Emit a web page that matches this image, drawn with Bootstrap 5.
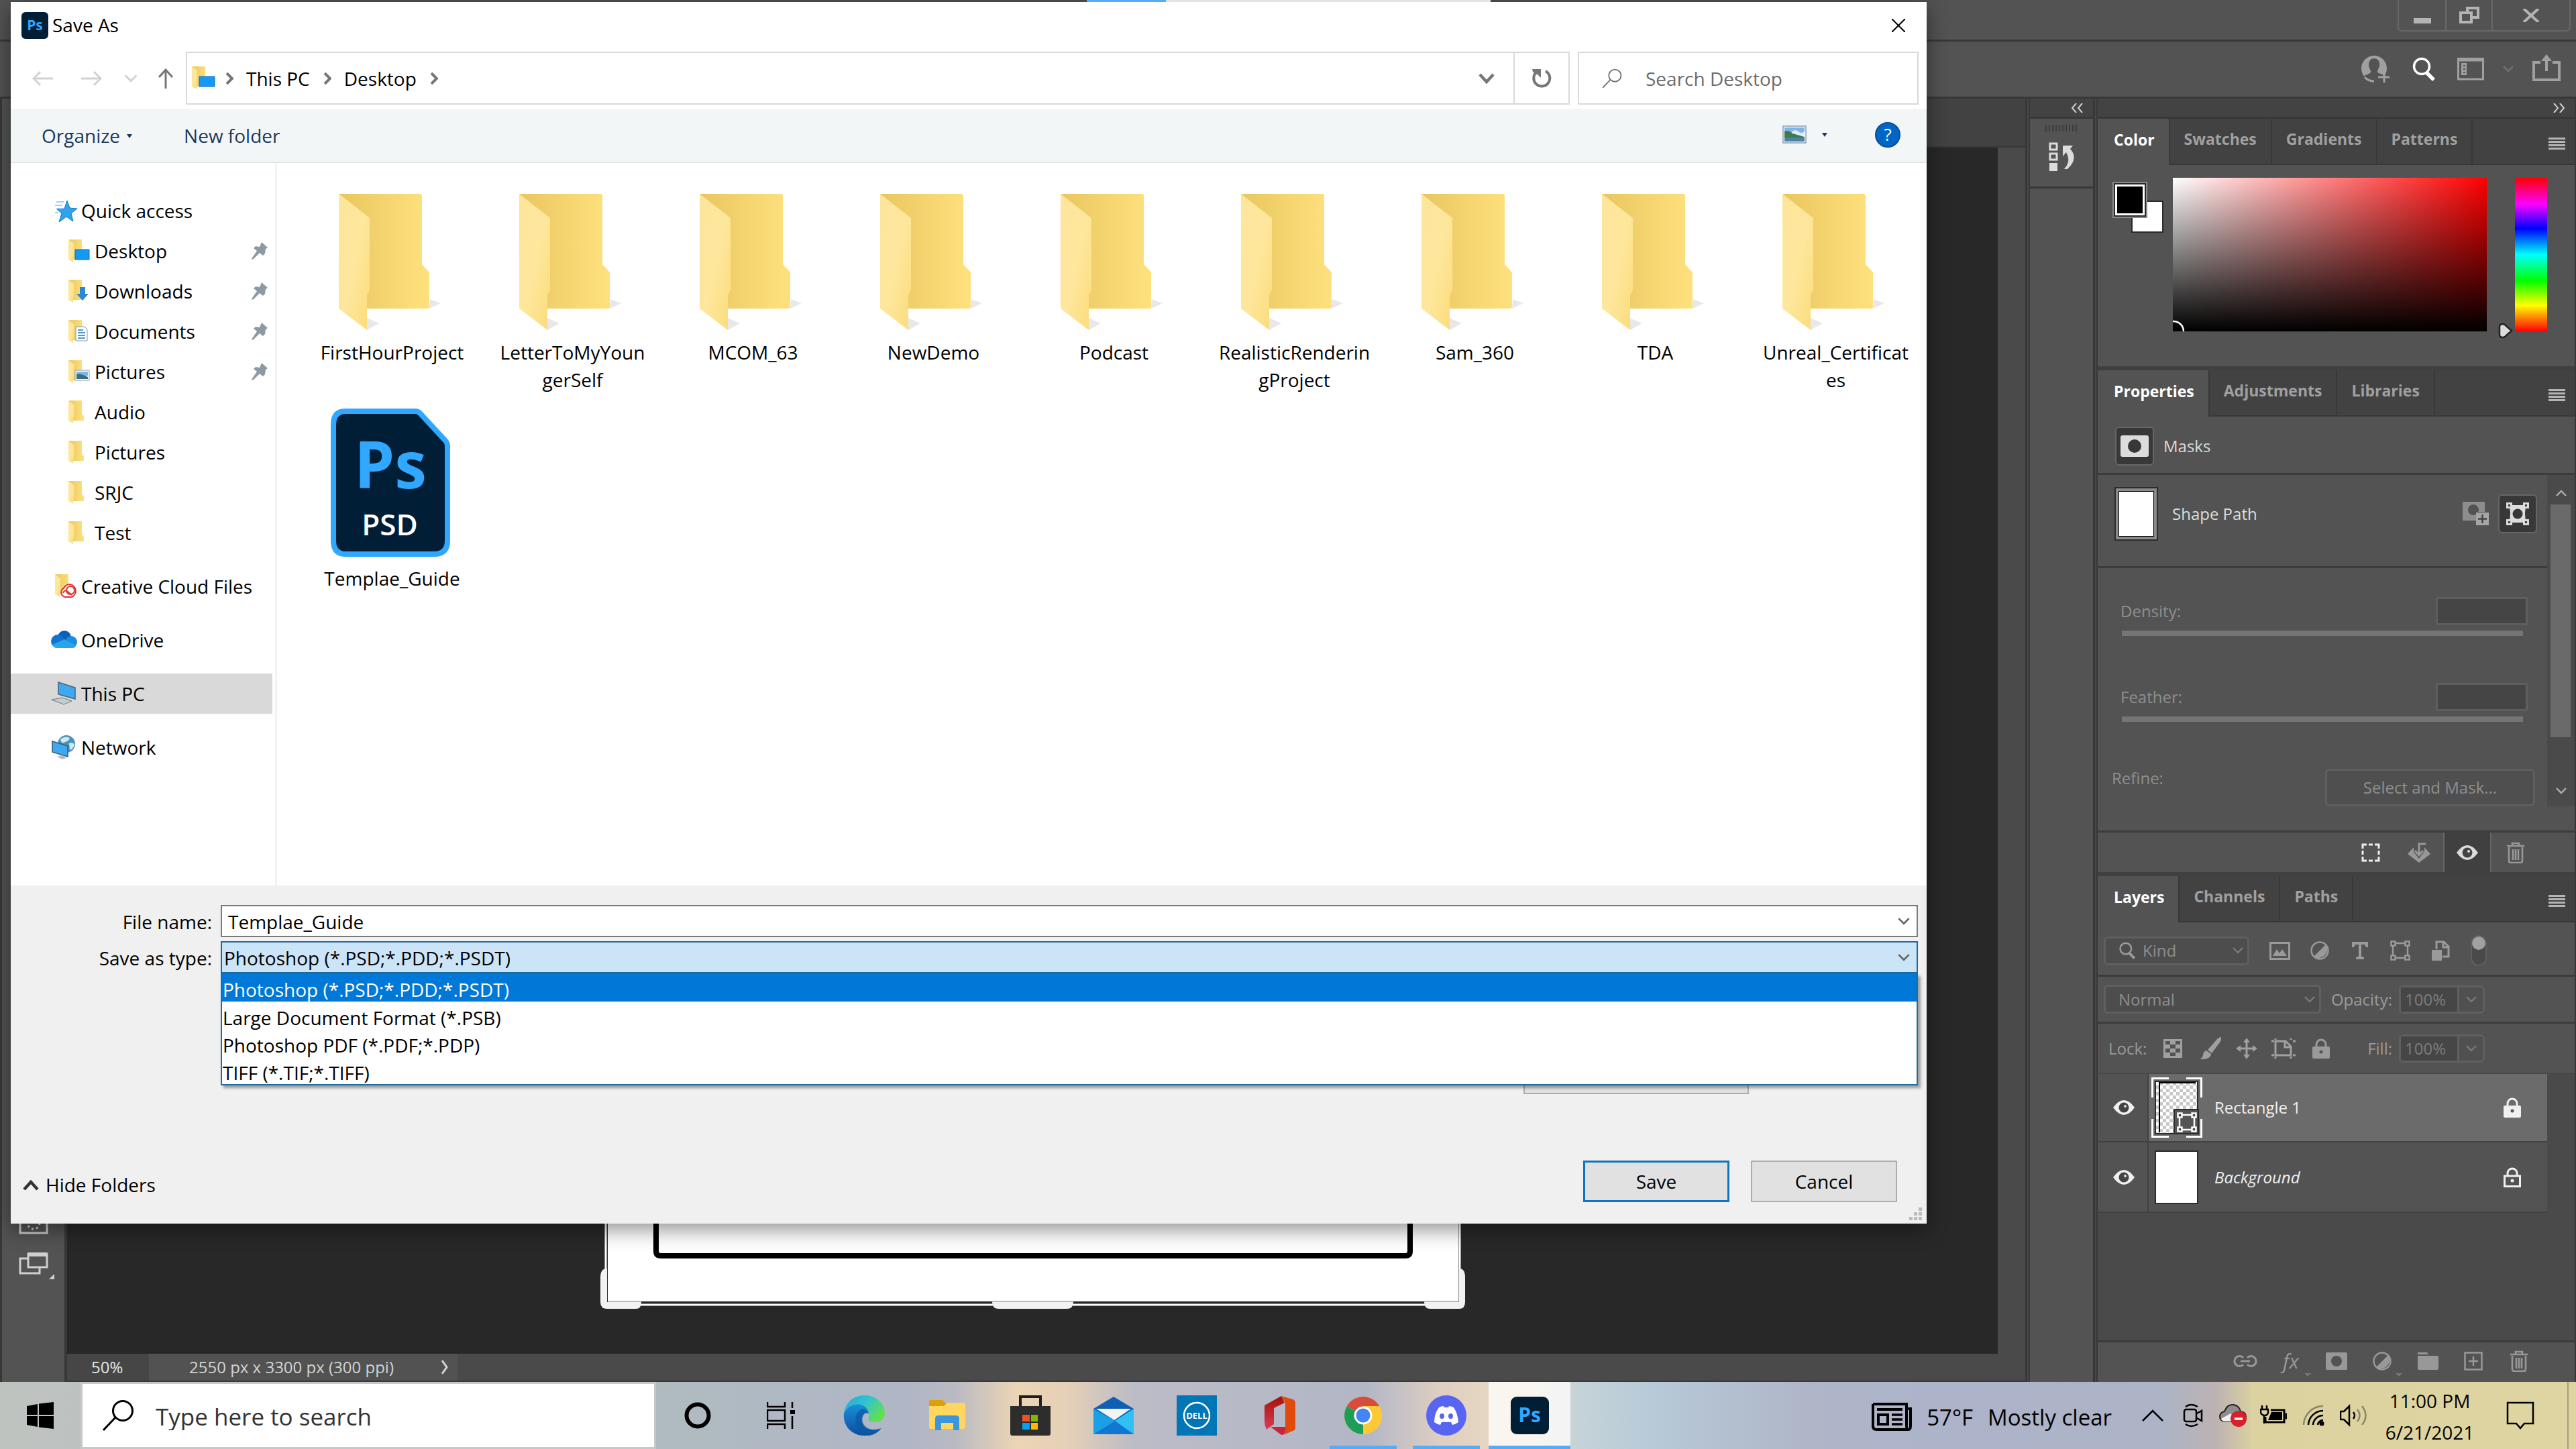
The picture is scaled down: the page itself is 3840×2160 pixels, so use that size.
<!DOCTYPE html>
<html lang="en">
<head>
<meta charset="utf-8">
<meta name="viewport" content="width=device-width, initial-scale=1">
<title>Save As</title>
<link href="https://cdn.jsdelivr.net/npm/bootstrap@5.3.0/dist/css/bootstrap.min.css" rel="stylesheet">
<style>
  html, body { height: 100%; }
  body { font-family: "Open Sans", "Noto Sans", sans-serif; font-size: 28px; line-height: 41px; color: #000; background: #282828; overflow: hidden; }
  svg { display: block; flex: none; }
  button { font: inherit; color: inherit; background: none; border: 0; padding: 0; }
  a { color: inherit; text-decoration: none; }
  .slot { display: flex; align-items: center; justify-content: center; flex: none; }
  .w52 { width: 52px; } .w54 { width: 54px; } .w56 { width: 56px; } .w58 { width: 58px; } .w60 { width: 60px; } .w72 { width: 72px; }

  /* ---- Photoshop window ---- */
  .ps-app { background: #535353; color: #dcdcdc; font-size: 24px; line-height: 28px; min-height: 0; }
  .ps-title { height: 62px; border-bottom: 3px solid #383838; }
  .win-box { height: 47px; margin-right: 8px; border: 2px solid #676767; border-top: 0; border-radius: 0 0 6px 6px; color: #b4b4b4; }
  .win-box button { width: 69px; }
  .win-box button:last-child { width: 116px; }
  .win-box button + button { border-left: 2px solid #676767; }
  .ps-options { height: 85px; border-bottom: 3px solid #383838; padding-right: 23px; color: #a0a0a0; }
  .ps-tools { width: 100px; border-left: 3px solid #383838; border-right: 4px solid #383838; padding-left: 25px; padding-bottom: 152px; color: #cfcfcf; }
  .doc-tabs { height: 73px; background: #424242; border-bottom: 2px solid #383838; }
  .doc-canvas { background: #282828; }
  .artboard { left: 795px; bottom: 66px; }
  .doc-vbar { width: 41px; background: #4a4a4a; }
  .doc-status { height: 42px; background: #4a4a4a; border-bottom: 2px solid #383838; }
  .zoom-field { width: 122px; background: #464646; color: #e6e6e6; padding-left: 36px; }
  .size-field { width: 460px; background: #525252; padding: 0 14px 0 60px; color: #d2d2d2; }
  .sep-v { width: 7px; background: #474747; border-left: 3px solid #383838; border-right: 2px solid #383838; }
  .dock { width: 94px; }
  .dock-top { height: 30px; background: #434343; border-bottom: 3px solid #383838; padding-right: 14px; color: #d0d0d0; }
  .dock-group { height: 104px; border-bottom: 3px solid #383838; padding-top: 9px; }
  .grip { width: 48px; height: 10px; margin-bottom: 16px; background: repeating-linear-gradient(90deg, #3c3c3c 0 2px, transparent 2px 5px); }
  .panels { width: 713px; border-right: 2px solid #383838; }
  .panel { background: #535353; }
  .panel + .panel { border-top: 6px solid #404040; }
  .ptabs { height: 69px; background: #424242; border-bottom: 2px solid #383838; }
  .ptab { padding: 0 21px 7px; border-right: 2px solid #383838; color: #a0a0a0; font-weight: 700; font-size: 23px; height: 67px; }
  .ptab.on { background: #535353; color: #fff; height: 69px; padding-left: 24px; }
  .pmenu { width: 25px; height: 18px; margin: 6px 14px 0 0; background: repeating-linear-gradient(#b4b4b4 0 3px, transparent 3px 5px); }
  .color-body { height: 300px; padding: 19px 41px 0 22px; }
  .chips { width: 90px; height: 80px; }
  .chip-fg { left: 0; top: 6px; width: 44px; height: 46px; margin: 4px; background: #000; border: 3px solid #fff; outline: 2px solid #2a2a2a; box-shadow: 0 0 0 4px #8a8a8a; }
  .chip-bg { left: 28px; top: 34px; width: 48px; height: 48px; background: #fff; border: 2px solid #2a2a2a; }
  .sv-field { height: 229px; background: linear-gradient(to top, #000, rgba(0,0,0,0)), linear-gradient(to right, #fff, #f00); }
  .hue-arrow { margin: 216px 0 0 17px; }
  .hue { width: 48px; height: 229px; margin-left: 3px; background: linear-gradient(#f00, #f0f 17%, #00f 33%, #0ff 50%, #0f0 67%, #ff0 83%, #f00); }
  .masks-row { height: 87px; border-bottom: 3px solid #3c3c3c; padding: 4px 0 0 26px; gap: 14px; }
  .tile-btn { width: 58px; height: 58px; background: #383838; border: 2px solid #666; border-radius: 6px; color: #dcdcdc; }
  .shape-row { height: 139px; border-bottom: 3px solid #3c3c3c; padding: 14px 15px 34px 25px; gap: 21px; }
  .thumb { width: 65px; height: 80px; background: #fff; border: 2px solid #2c2c2c; margin-right: 24px; }
  .thumb-pad { box-shadow: inset 0 0 0 4px #8a8a8a, inset 0 0 0 5px #000; margin-right: 0; }
  .dim { color: #8e8e8e; }
  .mask-form { padding: 43px 18px 0 21px; }
  .num-box { width: 137px; height: 42px; background: #454545; border: 3px solid #5e5e5e; }
  .num-row { padding: 0 11px 0 13px; margin-bottom: 8px; }
  .track { appearance: none; display: block; height: 8px; width: auto; margin: 0 18px 70px 15px; background: #757575; align-self: stretch; }
  .track::-webkit-slider-thumb { appearance: none; width: 0; height: 0; }
  .sm-btn { width: 313px; height: 56px; border: 3px solid #5f5f5f; border-radius: 6px; background: #4f4f4f; }
  .vscroll { width: 41px; background: #4a4a4a; padding: 22px 0 18px; color: #b0b0b0; }
  .vthumb { width: 30px; height: 347px; background: #6a6a6a; margin: 12px 6px 0 5px; }
  .pfoot { height: 62px; border-top: 3px solid #3c3c3c; padding-right: 52px; color: #989898; }
  .pfoot.mfoot { margin-top: 36px; }
  .pfoot .slot { width: 72px; height: 100%; }
  .lfoot { padding-right: 49px; padding-bottom: 4px; }
  .lfoot .slot { width: 68px; position: relative; }
  .more::after { content: ""; position: absolute; right: 4px; bottom: 4px; border: 5px solid transparent; border-top-color: #757575; border-bottom: 0; }
  .fx { font-size: 30px; font-style: italic; }
  .eye-on { background: #404040; color: #dcdcdc; border-left: 2px solid #666; border-right: 2px solid #666; }
  .lrow { border-bottom: 3px solid #3c3c3c; padding: 0 134px 0 9px; color: #9a9a9a; height: 70px; }
  .lrow.kind-row { height: 81px; padding: 6px 0 0 9px; }
  .lrow.lock-row { height: 75px; padding-left: 16px; border-bottom: 2px solid #484848; }
  .lock-row > span:first-child { width: 68px; }
  .combo { height: 43px; border: 3px solid #5f5f5f; border-radius: 6px; background: #4d4d4d; padding: 0 6px 0 19px; gap: 10px; flex: none; width: 324px; }
  .kind-row .combo { width: 217px; }
  .combo > svg:last-child, .pct svg { color: #7a7a7a; }
  .combo select { appearance: none; background: none; border: 0; color: #8e8e8e; opacity: 1; padding: 0; width: 100%; min-width: 0; font: inherit; line-height: 28px; outline: 0; }
  .pct { width: 128px; height: 42px; border: 3px solid #5f5f5f; border-radius: 6px; background: #505050; margin-left: 10px; }
  .pct input { width: 87px; background: #464646; border: 0; border-right: 3px solid #5f5f5f; color: #7c7c7c; font: inherit; padding: 0 0 0 6px; }
  .filters { margin-left: 15px; }
  .toggle { width: 24px; height: 46px; border: 2px solid #5f5f5f; border-radius: 12px; background: #4a4a4a; }
  .toggle::before { content: ""; display: block; width: 20px; height: 20px; border-radius: 50%; background: #a0a0a0; }
  .layers { background: #4a4a4a; }
  .layer { margin-right: 41px; background: #535353; border-bottom: 2px solid #424242; color: #f0f0f0; }
  .layer .eye { width: 76px; border-right: 2px solid #424242; padding-left: 4px; }
  .layer .face { padding: 0 38px 0 9px; }
  .layer.sel .face { background: #6b6b6b; }
  .layer.sel { height: 102px; }
  .layer.back { height: 105px; }
  .checker { background: repeating-conic-gradient(#c8c8c8 0 25%, #fff 0 50%) 0 0 / 10px 10px; }
  .sel-frame { left: -5px; top: -5px; }
  .sel-kind { left: 33px; top: 47px; color: #fff; }

  /* ---- Save dialog ---- */
  .top-strip { left: 1620px; top: 0; width: 602px; height: 3px; background: linear-gradient(90deg, #56acf6 0 118px, #e4e4e4 118px); }
  .dlg { left: 16px; right: 968px; top: 3px; bottom: 236px; background: #fff; color: #000; font-size: 28px; line-height: 41px; box-shadow: 0 8px 30px rgba(0,0,0,.45); }
  .dlg-title { height: 69px; padding: 0 32px 0 16px; gap: 6px; }
  .dlg-nav { height: 90px; padding: 5px 12px 6px; color: #767676; }
  .off { color: #d2d2d2; }
  .recent { width: 46px; }
  .go-up { width: 57px; margin-right: 2px; }
  .crumbs { border: 2px solid #d9d9d9; height: 79px; color: #000; padding-left: 7px; }
  .crumbs a { padding-top: 2px; margin: 0 20px 0 19px; }
  .crumbs .home { margin-right: 14px; }
  .crumbs .drop { margin-right: 28px; }
  .refresh { width: 82px; border-left: 2px solid #d9d9d9; }
  .find { width: 508px; height: 79px; border: 2px solid #d9d9d9; margin-left: 12px; padding-left: 33px; gap: 34px; }
  .find input { border: 0; outline: 0; font: inherit; padding: 2px 0 0; min-width: 0; }
  .find input::placeholder { color: #6b6b6b; opacity: 1; }
  .dlg-bar { height: 81px; background: #f2f6f7; border-bottom: 2px solid #e2e6e8; color: #1e395b; padding: 2px 39px 0 46px; }
  .gap10 { gap: 10px; }
  .gap13 { gap: 13px; }
  .newf { margin-left: 77px; }
  .viewb { gap: 23px; }
  .help { width: 38px; height: 38px; background: #0066c6; color: #fff; margin-left: 71px; border: 2px solid #0b4d96; border-radius: 50%; font-size: 26px; }
  .side { width: 397px; border-right: 3px solid #f2f2f2; padding-top: 41px; }
  .side a { display: flex; align-items: center; height: 60px; padding-left: 59px; gap: 6px; color: #000; margin-right: 4px; white-space: nowrap; }
  .side a.sub { padding-left: 79px; }
  .side a.top { margin-top: 20px; }
  .side a.sel { background: #d9d9d9; }
  .side .pin { margin-left: auto; margin-right: 7px; color: #8d9aa3; }
  .files { padding: 22px 0 0 37px; display: grid; grid-template-columns: repeat(auto-fill, 269px); grid-auto-rows: 337px; align-content: start; }
  .file { text-align: center; color: #000; }
  .file svg { margin: 0 auto; }
  .dlg-main { min-height: 0; }
  .dlg-foot { background: #f0f0f0; height: 504px; padding-top: 29px; }
  .frow { height: 48px; padding-right: 13px; margin-bottom: 6px; }
  .frow label { width: 313px; padding: 2px 13px 0 0; text-align: right; }
  .frow input { height: 48px; border: 2px solid #7a7a7a; padding: 2px 9px 0; font: inherit; outline: 0; }
  .frow select { appearance: none; width: 100%; height: 48px; border: 2px solid #1b6a9c; background: #cce4f7; padding: 2px 3px 0; font: inherit; color: #000; outline: 0; }
  .mid-arrow { right: 12px; top: 19px; color: #666; pointer-events: none; }
  .types { left: 0; right: 0; top: 48px; background: #fff; border: 2px solid #1b6fa0; border-top: 0; box-shadow: 4px 4px 4px rgba(0,0,0,.35); z-index: 3; }
  .types li { padding-left: 1px; height: 41px; line-height: 49px; }
  .types li.on { background: #0078d7; color: #fff; height: 42px; }
  .wbtn { width: 218px; height: 62px; background: #e1e1e1; border: 2px solid #adadad; }
  .wbtn.def { border: 3px solid #0e74c4; }
  .under { width: 336px; margin: 112px 265px 0 auto; }
  .dlg-actions { padding: 0 44px 32px 18px; gap: 32px; }
  .hide-btn { padding-top: 11px; }
  .hide-f { width: 163px; overflow: hidden; white-space: nowrap; }
  .resize-grip { right: 6px; bottom: 5px; }

  /* ---- Taskbar ---- */
  .task { height: 100px; background: linear-gradient(90deg, #bfc3c0 0, #b0bbc0 26%, #b0b6c6 35%, #b8b9c2 37%, #ecd5b5 39.5%, #e4d0b8 41.5%, #bcbcc6 44%, #b2b6c6 53%, #e0cfc2 56%, #eadcc0 59%, #c5d3d8 61.2%, #b7cad8 64%, #b0b6c8 70%, #adb3ca 75%, #adb4c6 84%, #bcb2b2 86%, #dcd2a0 87.5%, #dfd5a2 100%); }
  .start-btn { width: 120px; }
  .task .app { width: 124px; height: 100px; position: relative; }
  .task .run::after { content: ""; position: absolute; left: 12px; right: 12px; bottom: 0; height: 5px; background: #56acf6; }
  .task .front { background: rgba(255,255,255,.75); width: 122px; margin-left: 1px; }
  .task .front::after { left: 0; right: 0; }
  .task-find { width: 858px; background: #fff; border: 3px solid #c6c8c8; padding-left: 29px; gap: 32px; }
  .task-find input { border: 0; outline: 0; font-size: 35px; padding: 2px 0 0; }
  .task-find input::placeholder { color: #333; opacity: 1; }
  .weather { font-size: 33px; gap: 22px; padding: 4px 31px 0 0; }
  .tray { width: 60px; }
  .clock { width: 166px; line-height: 47px; padding-top: 4px; text-align: center; }
  .notes { width: 104px; }
  .peek { margin-left: 18px; width: 13px; border-left: 2px solid #a89f7c; }
</style>
</head>
<body class="d-flex flex-column">
<svg width="0" height="0" class="position-absolute" aria-hidden="true">
  <defs>
    <linearGradient id="gb" x1="0" x2="1"><stop offset="0" stop-color="#e9c660"/><stop offset=".6" stop-color="#f6d772"/><stop offset="1" stop-color="#fee17e"/></linearGradient>
    <linearGradient id="gf" x1="0" y1="0" x2="1" y2="1"><stop offset="0" stop-color="#fde69b"/><stop offset=".5" stop-color="#fee79d"/><stop offset="1" stop-color="#fcdc7a"/></linearGradient>
    <linearGradient id="ge1" x1="0" y1="0" x2="1" y2=".6"><stop offset="0" stop-color="#2aa8d8"/><stop offset=".5" stop-color="#30c3d0"/><stop offset="1" stop-color="#62e04c"/></linearGradient>
    <linearGradient id="ge2" x1="0" y1="0" x2="0" y2="1"><stop offset="0" stop-color="#1a8fd8"/><stop offset="1" stop-color="#0b4fa0"/></linearGradient>
    <linearGradient id="go" x1="0" y1="0" x2="0" y2="1"><stop offset="0" stop-color="#a01408"/><stop offset="1" stop-color="#e03a58"/></linearGradient>
  </defs>
  <symbol id="folder" viewBox="0 0 156 206">
    <path d="M135 171l17-8-16-6z" fill="#d8d8d8" opacity=".6"/><path d="M42 203l18-10-18-8z" fill="#d8d8d8" opacity=".6"/>
    <path d="M0 0h121q3 0 3 3v102l11 12v51q0 3-3 3H20z" fill="url(#gb)"/>
    <path d="M0 0l46 36v107l-4 8v52L0 171z" fill="url(#gf)"/>
  </symbol>
  <symbol id="sfolder" viewBox="0 0 24 34"><path d="M0 0h20v20l3 3v7H6z" fill="url(#gb)"/><path d="M0 0l8 6v19l-1 2v7L0 30z" fill="url(#gf)"/></symbol>
  <symbol id="pin" viewBox="0 0 26 26"><path d="M17 0l9 8-3 2-1 7-3 3-5-4-9 9-3 1 1-3 7-10-5-4 3-3 6 1z" fill="currentColor"/></symbol>
  <symbol id="chev" viewBox="0 0 16 10"><path d="M1 1l7 7 7-7" fill="none" stroke="currentColor" stroke-width="2.4"/></symbol>
  <symbol id="uchev" viewBox="0 0 16 10"><path d="M1 9l7-7 7 7" fill="none" stroke="currentColor" stroke-width="2.4"/></symbol>
  <symbol id="rchev" viewBox="0 0 12 18"><path d="M2 1l8 8-8 8" fill="none" stroke="#767676" stroke-width="4"/></symbol>
  <symbol id="eye" viewBox="0 0 32 22"><path d="M0 11Q16-11 32 11 16 33 0 11z" fill="currentColor"/><circle cx="16" cy="11" r="7.500" fill="#444"/><circle cx="18" cy="9" r="2" fill="#ddd"/></symbol>
  <symbol id="trash" viewBox="0 0 28 32"><path d="M1 6h26M9 5V2h10v3M4 8v20q0 3 3 3h14q3 0 3-3V8M10 11v16M14 11v16M18 11v16" fill="none" stroke="currentColor" stroke-width="2.600"/></symbol>
  <symbol id="half" viewBox="0 0 28 28"><circle cx="14" cy="14" r="12.500" fill="none" stroke="currentColor" stroke-width="2.500"/><path d="M23 5A13 13 0 0 1 5 23z" fill="currentColor"/></symbol>
  <symbol id="vec" viewBox="0 0 30 30"><path d="M4 4h22v22H4z" fill="none" stroke="currentColor" stroke-width="2.500"/><g fill="#4a4a4a" stroke="currentColor" stroke-width="2.500"><path d="M1.500 1.500h6v6h-6zM22.500 1.500h6v6h-6zM1.500 22.500h6v6h-6zM22.500 22.500h6v6h-6z"/></g></symbol>
  <symbol id="pad" viewBox="0 0 28 30"><path d="M7 13V9a7 7 0 0 1 14 0v4" fill="none" stroke="currentColor" stroke-width="3"/><rect x="1" y="12" width="26" height="18" rx="2" fill="currentColor"/><circle cx="14" cy="20" r="2.500" fill="#555"/></symbol>
  <symbol id="mag" viewBox="0 0 36 36"><circle cx="15" cy="14" r="11.500" fill="none" stroke="currentColor" stroke-width="3.500"/><path d="M22 23l11 11" stroke="currentColor" stroke-width="5.500"/></symbol>
  <symbol id="glass" viewBox="0 0 48 48"><circle cx="31" cy="17" r="14.500" fill="none" stroke="currentColor" stroke-width="3"/><path d="M20 27L2 46" stroke="currentColor" stroke-width="3"/></symbol>
</svg>

<main class="ps-app flex-grow-1 d-flex flex-column position-relative">
  <header class="ps-title d-flex justify-content-end">
    <div class="win-box d-flex">
      <button class="slot" aria-label="Minimize"><svg width="26" height="8" class="mt-3"><rect width="26" height="8" fill="currentColor"/></svg></button>
      <button class="slot" aria-label="Restore"><svg width="30" height="25" viewBox="0 0 30 25" fill="none" stroke="currentColor" stroke-width="4"><path d="M12 10V2h16v14h-8M2 9h16v14H2z"/></svg></button>
      <button class="slot" aria-label="Close Photoshop"><svg width="26" height="20" viewBox="0 0 26 20"><path d="M2 0l22 20M24 0L2 20" stroke="currentColor" stroke-width="4"/></svg></button>
    </div>
  </header>
  <div class="ps-options d-flex align-items-center justify-content-end">
    <button class="slot me-4" aria-label="Share with people"><svg width="44" height="42" viewBox="0 0 44 42"><circle cx="20" cy="20" r="19" fill="currentColor"/><path d="M20 5c6 0 9 5 8 11-1 5-3 6-3 9 0 2 6 3 9 5l-4 12H14q-8-3-10-10c4-3 11-4 11-7 0-4-3-5-3-10 0-6 3-10 8-10z" fill="#535353"/><path d="M6 33q5 6 14 6M26 33h17M35 25v16" stroke="currentColor" stroke-width="3" fill="none"/></svg></button>
    <button class="slot me-4 px-2 text-white" aria-label="Search"><svg width="36" height="36"><use href="#mag"/></svg></button>
    <button class="slot" aria-label="Workspace"><svg width="40" height="34" viewBox="0 0 40 34"><path d="M1.500 4h37v28h-37z" fill="none" stroke="currentColor" stroke-width="3"/><path d="M0 0h40v4H0z" fill="currentColor"/><path d="M6 8h8v18H6z" fill="currentColor"/><path d="M9 11h3v2H9zM9 16h3v2H9zM9 21h3v2H9z" fill="#535353"/></svg></button>
    <button class="slot w72" aria-label="Workspace list"><svg width="16" height="10" class="text-secondary"><use href="#chev"/></svg></button>
    <button class="slot pb-1" aria-label="Share"><svg width="42" height="40" viewBox="0 0 42 40" fill="none" stroke="currentColor" stroke-width="4"><path d="M12 12H2v26h38V12H30M21 25V7"/><path d="M21 0l8 10H13z" fill="currentColor" stroke="none"/></svg></button>
  </div>

  <div class="d-flex flex-grow-1 dlg-main">
    <aside class="ps-tools d-flex flex-column justify-content-end flex-shrink-0">
      <svg width="44" height="34" viewBox="0 0 44 34" class="mb-4" fill="none" stroke="currentColor" stroke-width="3"><path d="M2 2h40v28H2z"/><circle cx="22" cy="15" r="9" stroke-dasharray="3 4"/></svg>
      <svg width="54" height="42" viewBox="0 0 54 42" fill="none" stroke="currentColor" stroke-width="3"><path d="M13 10H2v22h29v-8"/><path d="M14 3h28v20H14z"/><path d="M14 4h28" stroke-width="6"/><path d="M53 33v8h-8z" fill="currentColor" stroke="none"/></svg>
    </aside>

    <section class="flex-grow-1 d-flex flex-column">
      <div class="doc-tabs flex-shrink-0"></div>
      <div class="flex-grow-1 d-flex">
        <div class="doc-canvas flex-grow-1 position-relative overflow-hidden">
          <!-- artboard with transform handles -->
          <svg class="artboard position-absolute" width="1290" height="180" viewBox="0 0 1290 180">
            <path d="M8 0v173h1273V0" fill="none" stroke="#fff" stroke-width="3"/>
            <path d="M0 132q0-13 10-13V169h51q0 10-8 10H10q-10 0-10-10zM584 169h121q0 10-10 10H594q-10 0-10-10zM1228 169h52V119q9 0 9 13v37q0 10-9 10h-43q-9 0-9-10z" fill="#f2f2f2"/>
            <path d="M11 0h1268v168H11z" fill="#fff"/><path d="M11 168h50M584 168h121M1228 168h51" stroke="#bbb" stroke-width="2"/>
            <path d="M83 0v93q0 7 7 7h1110q7 0 7-7V0" fill="none" stroke="#000" stroke-width="8"/>
          </svg>
        </div>
        <div class="doc-vbar"></div>
      </div>
      <div class="doc-status d-flex flex-shrink-0">
        <div class="zoom-field d-flex align-items-center">50%</div>
        <div class="size-field d-flex align-items-center justify-content-between"><span>2550 px x 3300 px (300 ppi)</span><svg width="10" height="22" viewBox="0 0 10 22"><path d="M1 1l7 10-7 10" fill="none" stroke="currentColor" stroke-width="3"/></svg></div>
      </div>
    </section>

    <div class="sep-v flex-shrink-0"></div>
    <aside class="dock flex-shrink-0">
      <div class="dock-top d-flex align-items-center justify-content-end"><svg width="19" height="14" viewBox="0 0 19 14"><path d="M8 0L2 7l6 7M17 0l-6 7 6 7" fill="none" stroke="currentColor" stroke-width="2"/></svg></div>
      <div class="dock-group d-flex flex-column align-items-center">
        <div class="grip"></div>
        <svg width="38" height="44" viewBox="0 0 38 44" fill="none" stroke="#dcdcdc" stroke-width="3"><path d="M2 2h10v9H2zM2 17h10v9H2z"/><path d="M1 31h12v12H1z" fill="#dcdcdc" stroke="none"/><path d="M21 5h15l-4 5q13 14-4 30l-5 0q11-12 3-25l-5 6z" fill="#dcdcdc" stroke="none"/></svg>
      </div>
    </aside>
    <div class="sep-v flex-shrink-0"></div>

    <aside class="panels flex-shrink-0 d-flex flex-column">
      <div class="dock-top d-flex align-items-center justify-content-end flex-shrink-0"><svg width="19" height="14" viewBox="0 0 19 14"><path d="M2 0l6 7-6 7M11 0l6 7-6 7" fill="none" stroke="currentColor" stroke-width="2"/></svg></div>

      <section class="panel">
        <div class="ptabs d-flex"><button class="ptab on">Color</button><button class="ptab">Swatches</button><button class="ptab">Gradients</button><button class="ptab">Patterns</button><span class="pmenu ms-auto align-self-center"></span></div>
        <div class="color-body d-flex">
          <div class="chips position-relative flex-shrink-0"><span class="chip-bg position-absolute"></span><span class="chip-fg position-absolute"></span></div>
          <div class="sv-field flex-grow-1 position-relative"><svg class="position-absolute bottom-0 start-0" width="18" height="18"><path d="M0 3a15 15 0 0 1 16 15" fill="none" stroke="#fff" stroke-width="2.500"/></svg></div>
          <svg class="hue-arrow" width="22" height="24" viewBox="0 0 22 24"><path d="M2 6q0-4 5-4 3 0 6 4l7 6-7 6q-3 4-6 4-5 0-5-4z" fill="#dcdcdc" stroke="#222" stroke-width="2.500"/></svg>
          <div class="hue"></div>
        </div>
      </section>

      <section class="panel">
        <div class="ptabs d-flex"><button class="ptab on">Properties</button><button class="ptab">Adjustments</button><button class="ptab">Libraries</button><span class="pmenu ms-auto align-self-center"></span></div>
        <div class="masks-row d-flex align-items-center">
          <span class="tile-btn slot"><svg width="42" height="32" viewBox="0 0 42 32"><rect width="42" height="32" rx="3" fill="currentColor"/><circle cx="21" cy="16" r="10" fill="#383838"/></svg></span><span>Masks</span>
        </div>
        <div class="d-flex">
          <div class="flex-grow-1">
            <div class="shape-row d-flex align-items-center">
              <span class="thumb thumb-pad"></span><span>Shape Path</span>
              <span class="d-flex align-items-center ms-auto gap13">
              <button class="slot dim" aria-label="Add mask"><svg width="40" height="36" viewBox="0 0 40 36"><path d="M0 0h33v15H20v13H0z" fill="currentColor"/><circle cx="16" cy="12" r="8" fill="#535353"/><path d="M20 16h19v19H20z" fill="#a5a5a5"/><path d="M23 25.500h13M29.500 19v13" stroke="#444" stroke-width="2.500"/></svg></button>
              <button class="tile-btn slot" aria-label="Vector mask"><svg width="34" height="34" viewBox="0 0 34 34"><path d="M4 4h26q-4 13 0 26H4Q8 17 4 4z" fill="currentColor"/><path d="M0 0h9v9H0zM25 0h9v9h-9zM0 25h9v9H0zM25 25h9v9h-9z" fill="currentColor"/><path d="M3 3h3v3H3zM28 3h3v3h-3zM3 28h3v3H3zM28 28h3v3h-3z" fill="#383838"/><circle cx="17" cy="17" r="7.500" fill="#383838"/></svg></button>
              </span>
            </div>
            <div class="mask-form d-flex flex-column dim">
              <div class="num-row d-flex align-items-center justify-content-between"><label for="dens">Density:</label><input id="dens" class="num-box" disabled></div>
              <input type="range" class="track" aria-label="Density" disabled>
              <div class="num-row d-flex align-items-center justify-content-between"><label for="feat">Feather:</label><input id="feat" class="num-box" disabled></div>
              <input type="range" class="track" aria-label="Feather" disabled>
              <div class="d-flex justify-content-between"><span>Refine:</span><button class="sm-btn" disabled>Select and Mask...</button></div>
            </div>
          </div>
          <div class="vscroll d-flex flex-column align-items-center">
            <svg width="16" height="10"><use href="#uchev"/></svg>
            <div class="vthumb"></div>
            <svg width="16" height="10" class="mt-auto"><use href="#chev"/></svg>
          </div>
        </div>
        <div class="pfoot mfoot d-flex justify-content-end">
          <button class="slot" aria-label="Load selection"><svg width="28" height="28" viewBox="0 0 28 28"><path d="M2 8V2h6M20 2h6v6M26 20v6h-6M8 26H2v-6M11 2h6M26 11v6M17 26h-6M2 17v-6" fill="none" stroke="#eee" stroke-width="3"/></svg></button>
          <button class="slot" aria-label="Apply mask"><svg width="34" height="30" viewBox="0 0 34 30"><path d="M9 7L0 17l17 13 17-13-9-10v6L17 24 9 14z" fill="currentColor"/><path d="M27 2H17v16M11 12l6 7 6-7" fill="none" stroke="currentColor" stroke-width="3"/></svg></button>
          <button class="slot eye-on" aria-label="Toggle mask"><svg width="32" height="22"><use href="#eye"/></svg></button>
          <button class="slot" aria-label="Delete mask"><svg width="28" height="32"><use href="#trash"/></svg></button>
        </div>
      </section>

      <section class="panel flex-grow-1 d-flex flex-column">
        <div class="ptabs d-flex flex-shrink-0"><button class="ptab on">Layers</button><button class="ptab">Channels</button><button class="ptab">Paths</button><span class="pmenu ms-auto align-self-center"></span></div>
        <div class="lrow kind-row d-flex align-items-center">
          <div class="combo d-flex align-items-center"><svg width="26" height="26"><use href="#mag"/></svg><select aria-label="Filter kind" disabled><option>Kind</option></select><svg width="16" height="10"><use href="#chev"/></svg></div>
          <span class="filters d-flex">
            <button class="slot w60" aria-label="Pixel layers"><svg width="31" height="27" viewBox="0 0 31 27"><path d="M1.500 1.500h28v24h-28z" fill="none" stroke="currentColor" stroke-width="3"/><path d="M5 21l6-10 4 6 4-6 7 10z" fill="currentColor"/></svg></button>
            <button class="slot w60" aria-label="Adjustment layers"><svg width="28" height="28"><use href="#half"/></svg></button>
            <button class="slot w60" aria-label="Type layers"><svg width="24" height="26" viewBox="0 0 24 26"><path d="M0 0h24v8h-3l-2-4h-5v18l4 1v3H6v-3l4-1V4H5L3 8H0z" fill="currentColor"/></svg></button>
            <button class="slot w60" aria-label="Shape layers"><svg width="30" height="30"><use href="#vec"/></svg></button>
            <button class="slot w60" aria-label="Smart objects"><svg width="27" height="30" viewBox="0 0 27 30"><path d="M7 13V2h11l7 7v15h-9M17 2v8h8" fill="none" stroke="currentColor" stroke-width="3"/><path d="M0 14h15v16H0z" fill="currentColor"/></svg></button>
            <button class="slot w54" aria-label="Filter on"><span class="toggle"></span></button>
          </span>
        </div>
        <div class="lrow d-flex align-items-center dim">
          <div class="combo d-flex align-items-center"><select aria-label="Blend mode" disabled><option>Normal</option></select><svg width="16" height="10"><use href="#chev"/></svg></div>
          <label for="opac" class="ms-auto">Opacity:</label>
          <div class="pct d-flex align-items-stretch"><input id="opac" value="100%" disabled><span class="slot flex-grow-1"><svg width="16" height="10"><use href="#chev"/></svg></span></div>
        </div>
        <div class="lrow lock-row d-flex align-items-center dim">
          <span>Lock:</span>
          <button class="slot w56" aria-label="Lock transparency"><svg width="28" height="28" viewBox="0 0 28 28"><path d="M1.500 1.500h25v25h-25z" fill="none" stroke="#a0a0a0" stroke-width="3"/><path d="M10 2h8v6h-8zM3 8h7v6H3zM18 8h7v6h-7zM10 14h8v6h-8zM3 20h7v6H3zM18 20h7v6h-7z" fill="#a0a0a0"/></svg></button>
          <button class="slot w56" aria-label="Lock pixels"><svg width="32" height="34" viewBox="0 0 32 34"><path d="M31 0q3 2-1 8L18 24l-6-5L26 3q3-3 5-3zM10 20l7 5q-1 9-17 8 5-2 5-7 1-5 5-6z" fill="#a0a0a0"/></svg></button>
          <button class="slot w52" aria-label="Lock position"><svg width="32" height="32" viewBox="0 0 32 32"><path d="M16 3v26M3 16h26" stroke="#a0a0a0" stroke-width="3"/><path d="M16 0l5 7H11zM16 32l5-7H11zM0 16l7-5v10zM32 16l-7-5v10z" fill="#a0a0a0"/></svg></button>
          <button class="slot w58" aria-label="Lock artboard"><svg width="36" height="30" viewBox="0 0 36 30" fill="none" stroke="#a0a0a0" stroke-width="3"><path d="M6 4h15l8 8v13H6z"/><path d="M20 3v10h9"/><path d="M0 4h4M6 0v2M29 0v2M32 4h4M0 25h4M6 27v3M29 27v3M32 25h4"/></svg></button>
          <button class="slot w54" aria-label="Lock all"><svg width="28" height="30"><use href="#pad"/></svg></button>
          <label for="fillv" class="ms-auto">Fill:</label>
          <div class="pct d-flex align-items-stretch"><input id="fillv" value="100%" disabled><span class="slot flex-grow-1"><svg width="16" height="10"><use href="#chev"/></svg></span></div>
        </div>
        <div class="layers flex-grow-1">
          <div class="layer sel d-flex">
            <button class="eye slot" aria-label="Hide Rectangle 1"><svg width="32" height="22"><use href="#eye"/></svg></button>
            <div class="face flex-grow-1 d-flex align-items-center">
              <span class="position-relative">
                <span class="thumb checker d-block"></span>
                <svg class="sel-frame position-absolute" width="76" height="90" viewBox="0 0 76 90"><path d="M1.500 30V1.500H26M52 1.500h22.500V30M74.500 62v26.500H52M26 88.500H1.500V62" fill="none" stroke="#fff" stroke-width="3"/><path d="M12 82V8h54" fill="none" stroke="#000" stroke-width="2"/><path d="M34 48h36v36H34z" fill="#555" stroke="#2c2c2c" stroke-width="2"/></svg>
                <svg class="sel-kind position-absolute" width="30" height="30"><use href="#vec"/></svg>
              </span>
              <span>Rectangle 1</span>
              <svg width="28" height="30" class="ms-auto"><use href="#pad"/></svg>
            </div>
          </div>
          <div class="layer back d-flex">
            <button class="eye slot" aria-label="Hide Background"><svg width="32" height="22"><use href="#eye"/></svg></button>
            <div class="face flex-grow-1 d-flex align-items-center">
              <span class="thumb"></span>
              <span class="fst-italic">Background</span>
              <svg width="28" height="30" viewBox="0 0 28 30" class="ms-auto" fill="none" stroke="currentColor" stroke-width="3"><path d="M7 13V9a7 7 0 0 1 14 0v4M2.500 13h23v15.500h-23z"/><circle cx="14" cy="20" r="2.500" fill="currentColor" stroke="none"/></svg>
            </div>
          </div>
        </div>
        <div class="pfoot lfoot d-flex justify-content-end flex-shrink-0">
          <button class="slot" aria-label="Link"><svg width="36" height="20" viewBox="0 0 36 20" fill="none" stroke="currentColor" stroke-width="3"><path d="M15 5a7.500 7.500 0 1 0 0 10M21 5a7.500 7.500 0 1 1 0 10M11 10h14"/></svg></button>
          <button class="slot fx more" aria-label="Layer style">fx</button>
          <button class="slot" aria-label="Add layer mask"><svg width="32" height="26" viewBox="0 0 32 26"><rect width="32" height="26" rx="2" fill="currentColor"/><circle cx="16" cy="13" r="8" fill="#535353"/></svg></button>
          <button class="slot more" aria-label="Adjustment"><svg width="28" height="28"><use href="#half"/></svg></button>
          <button class="slot" aria-label="Group"><svg width="31" height="26" viewBox="0 0 31 26"><path d="M0 0h14l2 3H0zM0 5h29q2 0 2 2v17q0 2-2 2H2q-2 0-2-2z" fill="currentColor"/></svg></button>
          <button class="slot" aria-label="New layer"><svg width="28" height="28" viewBox="0 0 28 28"><path d="M1.500 1.500h25v25h-25zM7 14h14M14 7v14" fill="none" stroke="currentColor" stroke-width="2.500"/></svg></button>
          <button class="slot" aria-label="Delete layer"><svg width="28" height="32"><use href="#trash"/></svg></button>
        </div>
      </section>
    </aside>
  </div>

  <!-- Save As window -->
  <section class="dlg position-absolute d-flex flex-column" aria-label="Save As">
    <div class="dlg-title d-flex align-items-center">
      <svg width="40" height="40" viewBox="0 0 40 40"><rect width="40" height="40" rx="6" fill="#001e36"/><text x="20" y="27" text-anchor="middle" font-size="21" font-weight="700" fill="#31a8ff">Ps</text></svg>
      <span>Save As</span>
      <button class="ms-auto slot" aria-label="Close"><svg width="20" height="20" viewBox="0 0 20 20"><path d="M0 0l20 20M20 0L0 20" stroke="#000" stroke-width="2"/></svg></button>
    </div>
    <div class="dlg-nav d-flex align-items-center">
      <button class="slot w72 off" aria-label="Back"><svg width="32" height="22" viewBox="0 0 32 22" fill="none" stroke="currentColor" stroke-width="3"><path d="M31 11H3M12 1L2 11l10 10"/></svg></button>
      <button class="slot w72 off" aria-label="Forward"><svg width="32" height="22" viewBox="0 0 32 22" fill="none" stroke="currentColor" stroke-width="3"><path d="M1 11h28M20 1l10 10-10 10"/></svg></button>
      <button class="slot recent off" aria-label="Recent"><svg width="20" height="12"><use href="#chev"/></svg></button>
      <button class="slot go-up" aria-label="Up"><svg width="24" height="30" viewBox="0 0 24 30" fill="none" stroke="currentColor" stroke-width="3"><path d="M12 30V3M2 13L12 2l10 11"/></svg></button>
      <nav class="crumbs flex-grow-1 d-flex align-items-center" aria-label="Address">
        <svg class="home" width="36" height="36" viewBox="0 0 36 36"><use href="#sfolder" width="24" height="34"/><path d="M11 15h23v15H11z" fill="#1499f5" stroke="#0a6fc4"/></svg>
        <svg width="12" height="18"><use href="#rchev"/></svg>
        <a href="#">This PC</a>
        <svg width="12" height="18"><use href="#rchev"/></svg>
        <a href="#">Desktop</a>
        <svg width="12" height="18"><use href="#rchev"/></svg>
        <svg width="24" height="16" viewBox="0 0 24 16" class="drop ms-auto"><path d="M2 2l10 11L22 2" fill="none" stroke="#767676" stroke-width="4.500"/></svg>
        <button class="slot refresh h-100" aria-label="Refresh"><svg width="30" height="30" viewBox="0 0 30 30"><path d="M21 4a12 12 0 1 1-13 1" fill="none" stroke="#767676" stroke-width="4"/><path d="M1 1h13v13l-4-4-8-5z" fill="#767676"/></svg></button>
      </nav>
      <div class="find d-flex align-items-center"><svg width="32" height="30" viewBox="0 0 48 48"><use href="#glass"/></svg><input type="search" class="flex-grow-1" placeholder="Search Desktop" aria-label="Search Desktop"></div>
    </div>
    <div class="dlg-bar d-flex align-items-center flex-shrink-0">
      <button class="d-flex align-items-center gap10">Organize <svg width="8" height="6" viewBox="0 0 8 6"><path d="M0 0h8L4 6z" fill="currentColor"/></svg></button>
      <button class="newf">New folder</button>
      <button class="viewb ms-auto mb-1 d-flex align-items-center" aria-label="Change view"><svg width="36" height="27" viewBox="0 0 36 27"><path d="M1 1h34v25H1z" fill="#fff" stroke="#8aa0b4" stroke-width="1.500"/><path d="M3 3h30v12H3z" fill="#7db4f0"/><path d="M14 9q6-4 10 0t9 0v6H14z" fill="#dcebfa"/><path d="M3 9q6-3 12 3l18 5v5H3z" fill="#3f7a4a"/><path d="M3 18h30v6H3z" fill="#4a83a8"/></svg><svg width="8" height="6" viewBox="0 0 8 6"><path d="M0 0h8L4 6z" fill="currentColor"/></svg></button>
      <button class="slot help mb-1" aria-label="Help">?</button>
    </div>

    <div class="dlg-main flex-grow-1 d-flex">
      <nav class="side flex-shrink-0">
        <a href="#"><svg width="40" height="40" viewBox="0 0 40 40"><path d="M25 5l4 11 11 1-9 7 3 12-10-7-11 8 4-13-7-6 11-1z" fill="#2ea3ee" stroke="#1278c4"/><path d="M9 7h12M7 12h11M9 17h8M7 23h5" stroke="#7cc4f2" stroke-width="1.500"/></svg>Quick access</a>
        <a href="#" class="sub"><svg width="40" height="40" viewBox="0 0 40 40"><use href="#sfolder" x="7" y="3" width="24" height="34"/><path d="M17 18h21v15H17z" fill="#1499f5" stroke="#0a6fc4"/></svg>Desktop<svg class="pin" width="26" height="26"><use href="#pin"/></svg></a>
        <a href="#" class="sub"><svg width="40" height="40" viewBox="0 0 40 40"><use href="#sfolder" x="7" y="3" width="24" height="34"/><path d="M24 14h8v10h5l-9 10-9-10h5z" fill="#2b88d8"/></svg>Downloads<svg class="pin" width="26" height="26"><use href="#pin"/></svg></a>
        <a href="#" class="sub"><svg width="40" height="40" viewBox="0 0 40 40"><use href="#sfolder" x="7" y="3" width="24" height="34"/><path d="M18 13h13l4 4v17H18z" fill="#fff" stroke="#8896a4"/><path d="M21 18h8M21 22h11M21 26h11M21 30h11" stroke="#4a98d0" stroke-width="2"/></svg>Documents<svg class="pin" width="26" height="26"><use href="#pin"/></svg></a>
        <a href="#" class="sub"><svg width="40" height="40" viewBox="0 0 40 40"><use href="#sfolder" x="7" y="3" width="24" height="34"/><path d="M17 18h21v15H17z" fill="#fff" stroke="#8896a4"/><path d="M19 20h17v6H19z" fill="#79b8ee"/><path d="M19 24q6-2 17 4v3H19z" fill="#3a6f80"/></svg>Pictures<svg class="pin" width="26" height="26"><use href="#pin"/></svg></a>
        <a href="#" class="sub"><svg width="40" height="40" viewBox="0 0 40 40"><use href="#sfolder" x="7" y="3" width="24" height="34"/></svg>Audio</a>
        <a href="#" class="sub"><svg width="40" height="40" viewBox="0 0 40 40"><use href="#sfolder" x="7" y="3" width="24" height="34"/></svg>Pictures</a>
        <a href="#" class="sub"><svg width="40" height="40" viewBox="0 0 40 40"><use href="#sfolder" x="7" y="3" width="24" height="34"/></svg>SRJC</a>
        <a href="#" class="sub"><svg width="40" height="40" viewBox="0 0 40 40"><use href="#sfolder" x="7" y="3" width="24" height="34"/></svg>Test</a>
        <a href="#" class="top"><svg width="40" height="40" viewBox="0 0 40 40"><use href="#sfolder" x="7" y="2" width="24" height="34"/><path d="M22 36a7 7 0 0 1-2-13q3-6 9-6a10 10 0 0 1 3 19z" fill="#fff" stroke="#e0322e" stroke-width="2"/><circle cx="30" cy="26" r="6" fill="none" stroke="#e0322e" stroke-width="2"/><path d="M19 30q2-5 6-3l7 6" stroke="#e0322e" stroke-width="2" fill="none"/></svg>Creative Cloud Files</a>
        <a href="#" class="top"><svg width="40" height="40" viewBox="0 0 40 40"><circle cx="21" cy="16" r="10" fill="#0a5fb4"/><circle cx="11" cy="22" r="10" fill="#0f74d0"/><circle cx="31" cy="23" r="9" fill="#1b8ce0"/><path d="M3 27l18-8 17 9q0 4-6 4H10q-5 0-7-5z" fill="#28a4ea"/></svg>OneDrive</a>
        <a href="#" class="top sel"><svg width="40" height="40" viewBox="0 0 40 40"><path d="M12 3l25 8v17l-25-7z" fill="#3ea8f0" stroke="#4a6274" stroke-width="1.500"/><path d="M2 29l16-3 14 5-12 5z" fill="#c4ccd2" stroke="#6b7a86"/></svg>This PC</a>
        <a href="#" class="top"><svg width="40" height="40" viewBox="0 0 40 40"><circle cx="24" cy="15" r="13" fill="#4b93b8"/><path d="M15 8q7-6 14-2-1 5-7 6-5 4-7-4zM28 14q6-2 8 2-2 7-7 8z" fill="#cfe8f2"/><path d="M3 11l23 7v16L3 27z" fill="#3ea8f0" stroke="#3a5a74" stroke-width="1.500"/><path d="M10 34l8-2 6 4-6 2z" fill="#b4bcc2"/></svg>Network</a>
      </nav>
      <div class="files flex-grow-1">
        <a href="#" class="file"><svg width="240" height="240"><use href="#folder" x="40" y="24" width="156" height="206"/></svg>FirstHourProject</a>
        <a href="#" class="file"><svg width="240" height="240"><use href="#folder" x="40" y="24" width="156" height="206"/></svg>LetterToMyYoun<br>gerSelf</a>
        <a href="#" class="file"><svg width="240" height="240"><use href="#folder" x="40" y="24" width="156" height="206"/></svg>MCOM_63</a>
        <a href="#" class="file"><svg width="240" height="240"><use href="#folder" x="40" y="24" width="156" height="206"/></svg>NewDemo</a>
        <a href="#" class="file"><svg width="240" height="240"><use href="#folder" x="40" y="24" width="156" height="206"/></svg>Podcast</a>
        <a href="#" class="file"><svg width="240" height="240"><use href="#folder" x="40" y="24" width="156" height="206"/></svg>RealisticRenderin<br>gProject</a>
        <a href="#" class="file"><svg width="240" height="240"><use href="#folder" x="40" y="24" width="156" height="206"/></svg>Sam_360</a>
        <a href="#" class="file"><svg width="240" height="240"><use href="#folder" x="40" y="24" width="156" height="206"/></svg>TDA</a>
        <a href="#" class="file"><svg width="240" height="240"><use href="#folder" x="40" y="24" width="156" height="206"/></svg>Unreal_Certificat<br>es</a>
        <a href="#" class="file"><svg width="240" height="240" viewBox="0 0 240 240"><path d="M50 11h104q5 0 8 4l37 40q3 3 3 8v141q0 20-20 20H50q-18 0-18-20V31q0-20 18-20z" fill="#001e36" stroke="#31a8ff" stroke-width="8"/><text x="117" y="126" text-anchor="middle" font-size="96" font-weight="700" fill="#31a8ff">Ps</text><text x="116" y="196" text-anchor="middle" font-size="44" font-weight="600" fill="#fff">PSD</text></svg>Templae_Guide</a>
      </div>
    </div>

    <form class="dlg-foot flex-shrink-0 d-flex flex-column" onsubmit="return false">
      <div class="frow d-flex align-items-center flex-shrink-0"><label for="fname">File name:</label><div class="flex-grow-1 position-relative d-flex"><input id="fname" class="flex-grow-1" value="Templae_Guide"><svg class="mid-arrow position-absolute" width="18" height="11"><use href="#chev"/></svg></div></div>
      <div class="frow d-flex align-items-center flex-shrink-0"><label for="ftype">Save as type:</label>
        <div class="flex-grow-1 position-relative">
          <select id="ftype" class="d-block"><option>Photoshop (*.PSD;*.PDD;*.PSDT)</option></select>
          <svg class="mid-arrow position-absolute" width="18" height="11"><use href="#chev"/></svg>
          <ul class="types position-absolute list-unstyled m-0">
            <li class="on">Photoshop (*.PSD;*.PDD;*.PSDT)</li>
            <li>Large Document Format (*.PSB)</li>
            <li>Photoshop PDF (*.PDF;*.PDP)</li>
            <li>TIFF (*.TIF;*.TIFF)</li>
          </ul>
        </div>
      </div>
      <button type="button" class="wbtn under flex-shrink-0" aria-label="Options"></button>
      <div class="dlg-actions d-flex align-items-center mt-auto">
        <button type="button" class="hide-btn d-flex align-items-center me-auto gap10"><svg width="24" height="16" viewBox="0 0 24 16"><path d="M2 14L12 3l10 11" fill="none" stroke="#333" stroke-width="4.500"/></svg><span class="hide-f">Hide Folders</span></button>
        <button type="submit" class="wbtn def">Save</button>
        <button type="button" class="wbtn">Cancel</button>
      </div>
      <svg class="resize-grip position-absolute" width="20" height="19" viewBox="0 0 20 19" fill="#bcbcbc"><path d="M14 0h5v5h-5zM7 7h5v5H7zM14 7h5v5h-5zM0 14h5v5H0zM7 14h5v5H7zM14 14h5v5h-5z"/></svg>
    </form>
  </section>
  <div class="top-strip position-absolute"></div>
</main>

<footer class="task d-flex flex-shrink-0">
  <button class="slot start-btn" aria-label="Start"><svg width="40" height="40" viewBox="0 0 40 40"><path d="M0 6l16-3v16H0zM18 2.500L40 0v19H18zM0 21h16v16L0 34zM18 21h22v19l-22-2.500z"/></svg></button>
  <div class="task-find d-flex align-items-center flex-shrink-0"><svg width="48" height="48"><use href="#glass"/></svg><input class="flex-grow-1" placeholder="Type here to search" aria-label="Search Windows"></div>
  <button class="app slot" aria-label="Cortana"><svg width="40" height="40"><circle cx="20" cy="20" r="16.500" fill="none" stroke="#000" stroke-width="6"/></svg></button>
  <button class="app slot" aria-label="Task view"><svg width="42" height="40" viewBox="0 0 42 40" fill="none" stroke="#000" stroke-width="2.500"><path d="M1 0v7h26V0M1 12h26v16H1zM1 40v-7h26v7M38 0v9M38 21v19"/><path d="M35 12h7v6h-7z" fill="#000" stroke="none"/></svg></button>
  <button class="app slot" aria-label="Edge"><svg width="62" height="60" viewBox="0 0 62 60"><path d="M1 27C3 10 16 0 32 0c18 0 30 13 30 26 0 9-7 14-15 14-7 0-11-3-9-6 3-6 0-15-11-19-11-3-22 2-26 12z" fill="url(#ge1)"/><path d="M1 27c4-10 14-15 25-13 8 2 12 8 12 14-7-5-12 4-10 12 3 11 15 15 28 9-6 8-14 11-24 11C12 60-1 45 1 27z" fill="url(#ge2)"/><path d="M28 20c-13 6-14 26 4 40 9 1 18-2 25-11-14 5-25 0-28-9-2-8 2-15 8-14-2-4-5-6-9-6z" fill="#0c59a4" opacity=".7"/></svg></button>
  <button class="app slot" aria-label="File Explorer"><svg width="54" height="46" viewBox="0 0 54 46"><path d="M0 2q0-2 2-2h18l6 6-3 8H0z" fill="#dba006"/><path d="M0 9h22l5-5h24q3 0 3 3v33q0 3-3 3H3q-3 0-3-3z" fill="#ffd75e"/><path d="M9 45V28q0-5 5-5h26q5 0 5 5v17h-9V34H18v11z" fill="#3a96dd"/></svg></button>
  <button class="app slot" aria-label="Microsoft Store"><svg width="60" height="60" viewBox="0 0 60 60"><path d="M15 17V2h30v15" fill="none" stroke="#1f1f1f" stroke-width="4"/><path d="M0 16h60v41q0 3-3 3H3q-3 0-3-3z" fill="#2d2d2d"/><path d="M18 29h11v10H18z" fill="#f25022"/><path d="M31 29h10v10H31z" fill="#7fba00"/><path d="M18 41h11v10H18z" fill="#00a4ef"/><path d="M31 41h10v10H31z" fill="#ffb900"/></svg></button>
  <button class="app slot" aria-label="Mail"><svg width="60" height="56" viewBox="0 0 60 56"><path d="M30 0l30 18v20H0V18z" fill="#0f5fb4"/><path d="M0 18l32 18L60 18v36q0 2-2 2H2q-2 0-2-2z" fill="#1ba0e8"/><path d="M0 56l32-20L60 18v38z" fill="#2fc0f4"/><path d="M0 56h60L32 36z" fill="#1078d0"/><path d="M4 18h52L31 35z" fill="#f4f4f4"/></svg></button>
  <button class="app slot" aria-label="Dell"><svg width="60" height="60" viewBox="0 0 60 60"><path d="M0 0h60v60H0z" fill="#0076b6"/><circle cx="30" cy="30" r="19" fill="none" stroke="#fff" stroke-width="2.500"/><text x="30" y="35" text-anchor="middle" font-size="13" font-weight="700" fill="#fff">DELL</text></svg></button>
  <button class="app slot" aria-label="Office"><svg width="46" height="58" viewBox="0 0 46 58"><path d="M0 14L25 0l5 10-16 8v24l-11 8Q0 44 0 38z" fill="url(#go)"/><path d="M25 0l17 5q4 1 4 6v36q0 4-4 5l-14 6q3-2 3-8V10z" fill="#e04a0c"/><path d="M9 46h22v6q-1 6-6 6z" fill="#c8243c"/></svg></button>
  <button class="app slot run" aria-label="Chrome"><svg width="56" height="56" viewBox="0 0 56 56"><circle cx="28" cy="28" r="28" fill="#fcc934"/><path d="M28 28L3.800 14A28 28 0 0 1 52.200 14z" fill="#d94b3d"/><path d="M28 28L3.800 14A28 28 0 0 0 28 56z" fill="#1f9d57"/><path d="M28 14h24.200A28 28 0 0 1 28 56l12-21z" fill="#fcc934"/><circle cx="28" cy="28" r="13.500" fill="#fff"/><circle cx="28" cy="28" r="10.500" fill="#4285f4"/></svg></button>
  <button class="app slot run" aria-label="Discord"><svg width="60" height="60" viewBox="0 0 60 60"><circle cx="30" cy="30" r="30" fill="#5865f2"/><path d="M19 18q4-2 7-2l1 2h6l1-2q3 0 7 2 6 9 7 22-4 3-9 4l-2-4H23l-2 4q-5-1-9-4 0-13 7-22z" fill="#fff"/><ellipse cx="23.500" cy="31" rx="3.500" ry="4" fill="#5865f2"/><ellipse cx="36.500" cy="31" rx="3.500" ry="4" fill="#5865f2"/></svg></button>
  <button class="app slot run front" aria-label="Photoshop"><svg width="57" height="56" viewBox="0 0 57 56"><rect width="57" height="56" rx="9" fill="#001e36"/><text x="28" y="38" text-anchor="middle" font-size="30" font-weight="700" fill="#31a8ff">Ps</text></svg></button>

  <button class="weather ms-auto d-flex align-items-center text-nowrap"><svg width="60" height="42" viewBox="0 0 60 42" fill="none" stroke="#000"><path d="M2 2h50v32q0 6 3 6t3-6V9h-6M2 2v33q0 5 5 5h48" stroke-width="4"/><path d="M8 10h38" stroke-width="4"/><path d="M10 18h14v14H10z" stroke-width="4"/><path d="M30 18h16M30 25h16M30 32h16" stroke-width="3.500"/></svg><span>57°F</span><span>Mostly clear</span></button>
  <button class="tray slot" aria-label="Show hidden icons"><svg width="32" height="18" viewBox="0 0 32 18"><path d="M1 17L16 2l15 15" fill="none" stroke="#000" stroke-width="2.500"/></svg></button>
  <button class="tray slot" aria-label="Meet now"><svg width="30" height="36" viewBox="0 0 30 36" fill="none" stroke="#000" stroke-width="2.500"><rect x="2" y="9" width="18" height="18" rx="3"/><path d="M21 15l7-4v15l-7-4M4 5q8-6 18 0M4 31q8 6 18 0"/></svg></button>
  <button class="tray slot" aria-label="OneDrive"><svg width="42" height="36" viewBox="0 0 42 36"><path d="M8 27Q1 26 1 19q1-6 7-7Q12 1 21 2q9 1 11 10 8 1 8 8 0 7-8 7z" fill="#8d8d8d" stroke="#222" stroke-width="2"/><path d="M3 23l14-8 12 12H8q-4-1-5-4z" fill="#f0f0f0"/><circle cx="29" cy="23" r="12" fill="#d81f2a"/><path d="M23 23h12" stroke="#fff" stroke-width="3.500"/></svg></button>
  <button class="tray slot" aria-label="Battery"><svg width="40" height="30" viewBox="0 0 40 30" fill="none" stroke="#000" stroke-width="3"><path d="M16 7h20v18H8v-8"/><path d="M38 12h2v8h-2z" fill="#000" stroke-width="1"/><path d="M17 10h16v12H12z" fill="#000" stroke="none"/><path d="M3 0v6M10 0v6M1 6h11v5q-1 4-5 4t-6-4zM6 15v12" stroke-width="2.500"/></svg></button>
  <button class="tray slot" aria-label="Wi-Fi"><svg width="32" height="32" viewBox="0 0 32 32" fill="none" stroke="#000" stroke-width="2.500"><path d="M1 30A29 29 0 0 1 30 2" stroke="#8a8668"/><path d="M8 30A22 22 0 0 1 30 9M15 30A15 15 0 0 1 30 16M22 30a8 8 0 0 1 8-7"/><circle cx="28" cy="28" r="3.500" fill="#000" stroke="none"/></svg></button>
  <button class="tray slot" aria-label="Volume"><svg width="42" height="36" viewBox="0 0 42 36" fill="none" stroke="#000" stroke-width="2.500"><path d="M1 12h5l8-8v28l-8-8H1z"/><path d="M20 13q4 5 0 10"/><path d="M26 9q7 9 0 18M33 4q11 14 0 28" stroke="#8a8668"/></svg></button>
  <button class="clock">11:00 PM<br>6/21/2021</button>
  <button class="slot notes" aria-label="Notifications"><svg width="42" height="42" viewBox="0 0 42 42"><path d="M2 2h38v31H27l-6 7-6-7H2z" fill="none" stroke="#000" stroke-width="2.500"/></svg></button>
  <span class="peek"></span>
</footer>
<script src="https://cdn.jsdelivr.net/npm/bootstrap@5.3.0/dist/js/bootstrap.bundle.min.js"></script>
</body>
</html>
